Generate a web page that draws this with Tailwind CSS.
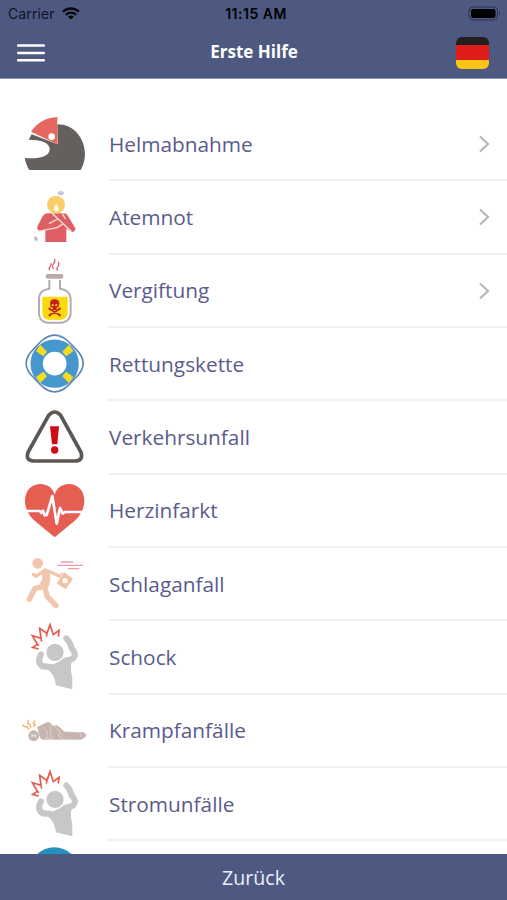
<!DOCTYPE html>
<html lang="de">
<head>
<meta charset="utf-8">
<title>Erste Hilfe</title>
<script src="https://cdn.jsdelivr.net/npm/@tailwindcss/browser@4"></script>
</head>
<body class="w-[507px] h-[900px] overflow-hidden bg-white flex flex-col font-['Open_Sans',sans-serif] text-[#5a5b8c]">
<header class="h-[79px] shrink-0 bg-[#4e5982] border-b border-[#8f9ab5]">
  <div class="h-[27px] grid grid-cols-3 items-center pl-2 pr-[6px] text-black font-['Inter',sans-serif]">
    <div class="flex items-center gap-[7px] text-[14px] text-[#101425]"><span class="tracking-[0.1px]">Carrier</span>
      <svg class="w-[18px] h-[13px]" viewBox="0 0 18 13" fill="none" stroke="#05070d" stroke-width="2.3"><path d="M1 4.8C5.5.4 12.5.4 17 4.8M3.9 7.8c2.9-2.8 7.3-2.8 10.2 0"/><path d="M9 12.6 5.9 9.7q3.1-2.4 6.2 0z" fill="#05070d" stroke="none"/></svg>
    </div>
    <div class="text-center text-[14px] font-semibold tracking-[0.5px] whitespace-nowrap pl-[3px]"><span>11:15 AM</span></div>
    <svg class="w-[33px] h-[15px] justify-self-end" viewBox="0 0 33 15"><rect x="1" y="1" width="28.5" height="13" rx="4" fill="none" stroke="#2d3450"/><rect x="3" y="3" width="24.5" height="9" rx="2" fill="#000"/><path d="M31 5.5q2 2 0 4z" fill="#2d3450"/></svg>
  </div>
  <div class="h-[51px] grid grid-cols-3 items-center pl-[17px] pr-[18px]">
    <svg class="w-[28px] h-[18px]" viewBox="0 0 28 18" stroke="#fff" stroke-width="2.5" stroke-linecap="round"><path d="M1.2 1.5h25.6M1.2 9h25.6M1.2 16.3h25.6"/></svg>
    <h1 class="text-center text-[17px] font-bold text-white whitespace-nowrap pl-[2px] pb-px"><span>Erste Hilfe</span></h1>
    <div class="w-[33px] h-[32px] rounded-[6px] overflow-hidden justify-self-end flex flex-col"><div class="h-[8px] bg-[#231f20]"></div><div class="h-[15px] bg-[#df1b1b]"></div><div class="flex-1 bg-[#fdc513]"></div></div>
  </div>
</header>

<main class="flex-1 min-h-0 overflow-hidden pt-[29px] text-[20.8px]">
  <ul>
    <li class="flex h-[73.33px]">
      <svg class="w-[90px] h-full ml-[10px] mr-[8px] overflow-visible" viewBox="0 9 270 220"><path d="M142 58C190 58 225 98 225 148Q225 172 212 195H58Q49 182 44 159C80 162 119 158 119 132C119 113 92 104 56 104L65 88 143 118z" fill="#65605e"/><path d="M142 36V118L63 80Q92 38 142 36z" fill="#e5675f"/><circle cx="125" cy="95" r="10" fill="#fff"/></svg>
      <div class="flex-1 border-b-2 border-[#f1f1f3] flex items-center justify-between pl-px pt-px pr-[17px]"><span>Helmabnahme</span><svg class="w-[12px] h-[18px]" viewBox="0 0 12 18" fill="none" stroke="#b7b7bc" stroke-width="2.2"><path d="m2 1.5 8 7.5-8 7.5"/></svg></div>
    </li>
    <li class="flex h-[73.33px]">
      <svg class="w-[90px] h-full ml-[10px] mr-[8px] overflow-visible" viewBox="0 4 270 220"><path d="M112 101H163Q171 102 176 112L196 146Q197 157 184 157L169 147V187H106V151L88 153Q78 149 83 139L98 110Q103 101 112 101z" fill="#df6064"/><path d="M85 155 141 144 157 134M126 101 185 156M117 132 143 118M157 102 166 118" fill="none" stroke="#f8dedd" stroke-width="4"/><circle cx="138" cy="75" r="27" fill="#f8cf68"/><path d="M139 72q-9 12-7 19 7 9 14 0 1-9-7-19z" fill="#fffdf4"/><path d="M142 39q4-7 16-4l5 6-5 6h-12z" fill="#c5c8d8"/><path d="m72 173 8-4 4 8-3 9-9-5z" fill="#d1d1d3"/><path d="m73 172 9 10" stroke="#929297" stroke-width="2"/></svg>
      <div class="flex-1 border-b-2 border-[#f1f1f3] flex items-center justify-between pl-px pt-px pr-[17px]"><span>Atemnot</span><svg class="w-[12px] h-[18px]" viewBox="0 0 12 18" fill="none" stroke="#b7b7bc" stroke-width="2.2"><path d="m2 1.5 8 7.5-8 7.5"/></svg></div>
    </li>
    <li class="flex h-[73.33px]">
      <svg class="w-[90px] h-full ml-[10px] mr-[8px] overflow-visible" viewBox="0 5 270 220"><path d="M118 80V106Q87 110 87 135V184Q91 207 113 208H156Q181 203 182 181V135Q180 110 150 106V80" fill="#fff" stroke="#b9aaab" stroke-width="6"/><path d="M97 130H173V178Q171 197 154 199H115Q99 197 97 181z" fill="#fbd90c"/><rect x="107" y="62" width="53" height="14" rx="6" fill="#b9aaab"/><path d="M119 51q-4-7 2-13 4-5 2-9M131 47q-8-7 0-16 6-7 2-15M143 52q-5-7 1-13 5-6 1-14" fill="none" stroke="#d65a68" stroke-width="3.5"/><path d="m119 167 30 18m0-18-30 18" stroke="#c51f16" stroke-width="5" stroke-linecap="round"/><g fill="#c51f16"><path d="M120 151q0-13 14-13t14 13l-2 9-6 3v7h-12v-7l-7-3z"/><circle cx="119" cy="166" r="3.5"/><circle cx="149" cy="166" r="3.5"/><circle cx="119" cy="186" r="3.5"/><circle cx="149" cy="186" r="3.5"/></g><path d="M125 153h6v5h-6zm11 0h6v5h-6z" fill="#fbd90c"/></svg>
      <div class="flex-1 border-b-2 border-[#f1f1f3] flex items-center justify-between pl-px pt-px pr-[17px]"><span>Vergiftung</span><svg class="w-[12px] h-[18px]" viewBox="0 0 12 18" fill="none" stroke="#b7b7bc" stroke-width="2.2"><path d="m2 1.5 8 7.5-8 7.5"/></svg></div>
    </li>
    <li class="flex h-[73.33px]">
      <svg class="w-[90px] h-full ml-[10px] mr-[8px] overflow-visible" viewBox="0 0 270 220"><path d="M91 42Q134 1 177 42L196 62Q243 107 196 150L177 170Q134 213 91 170L72 150Q25 107 72 62z" fill="#fff" stroke="#5c86b3" stroke-width="5"/><circle cx="134" cy="107" r="54" fill="none" stroke="#4797cf" stroke-width="37"/><path d="m91 52 19 19-10 13-21-15zm86 0-19 19 10 13 21-15zM91 164l19-19-10-13-21 15zm86 0-19-19 10-13 21 15z" fill="#f6dc1d" stroke="#f6dc1d" stroke-width="2"/></svg>
      <div class="flex-1 border-b-2 border-[#f1f1f3] flex items-center pl-px pt-px"><span>Rettungskette</span></div>
    </li>
    <li class="flex h-[73.33px]">
      <svg class="w-[90px] h-full ml-[10px] mr-[8px] overflow-visible" viewBox="0 -3 270 220"><path d="M116 40Q134 20 152 40L213 151Q220 175 198 177H70Q46 175 54 151z" fill="#fff" stroke="#5d5653" stroke-width="11"/><path d="M120 73H147L142 127H126z" fill="#cf0b18"/><circle cx="134" cy="144" r="11" fill="#cf0b18"/></svg>
      <div class="flex-1 border-b-2 border-[#f1f1f3] flex items-center pl-px pt-px"><span>Verkehrsunfall</span></div>
    </li>
    <li class="flex h-[73.33px]">
      <svg class="w-[90px] h-full ml-[10px] mr-[8px] overflow-visible" viewBox="0 -1 270 220"><path d="M134 58C122 17 68 17 51 50C37 81 49 112 72 135L134 186 196 135C219 112 231 81 217 50C200 17 146 17 134 58z" fill="#e65d52"/><path d="M45 107H90L94 113 99 106 104 120 110 119 127 62 140 145 150 98 158 115 165 110H225" fill="none" stroke="#fff" stroke-width="8" stroke-linejoin="round"/></svg>
      <div class="flex-1 border-b-2 border-[#f1f1f3] flex items-center pl-px pt-px"><span>Herzinfarkt</span></div>
    </li>
    <li class="flex h-[73.33px]">
      <svg class="w-[90px] h-full ml-[10px] mr-[8px] overflow-visible" viewBox="0 0 270 220"><g fill="none" stroke="#f2c5ad" stroke-linecap="round" stroke-linejoin="round"><path d="M101 115 75 121 58 154M104 117 112 146 138 173" stroke-width="16"/><path d="M70 79 78 85 101 69 120 71 148 84" stroke-width="10"/></g><path d="m93 69 13-9 14 8 1 27-6 24-21-3-4-10 8-15z" fill="#f2c5ad"/><circle cx="83" cy="46" r="16" fill="#f2c5ad"/><path d="m163 73 26 19-22 32-27-18z" fill="#efc2a8"/><path d="m148 89 7-13 13 3" fill="none" stroke="#efc2a8" stroke-width="4"/><circle cx="165" cy="98" r="8" fill="#fff8f2"/><path d="M153 42h36M142 52h77M174 62h34" stroke="#f29ba6" stroke-width="4"/></svg>
      <div class="flex-1 border-b-2 border-[#f1f1f3] flex items-center pl-px pt-px"><span>Schlaganfall</span></div>
    </li>
    <li class="flex h-[73.33px]">
      <svg class="w-[90px] h-full ml-[10px] mr-[8px] overflow-visible" viewBox="0 9 270 220"><g id="startled"><path d="M87 147Q100 156 116 147L155 125 188 119Q178 145 187 180L187 214 138 202Q134 170 113 154Q92 157 87 147z" fill="#c7c7c6"/><path d="M93 109Q80 133 97 144L123 147M169 61Q181 74 185 91 202 109 189 122L165 129" fill="none" stroke="#c7c7c6" stroke-width="18" stroke-linecap="round" stroke-linejoin="round"/><circle cx="135" cy="103" r="28" fill="#c7c7c6" stroke="#fff" stroke-width="4"/><path d="M86 93 68 88 82 79 67 53 93 61 89 31 111 46 120 20 130 50 147 37 145 56M82 79l5 4M93 61l2 10M111 46l-2 10" fill="none" stroke="#e4594e" stroke-width="5"/></g></svg>
      <div class="flex-1 border-b-2 border-[#f1f1f3] flex items-center pl-px pt-px"><span>Schock</span></div>
    </li>
    <li class="flex h-[73.33px]">
      <svg class="w-[90px] h-full ml-[10px] mr-[8px] overflow-visible" viewBox="0 -16 270 220"><circle cx="71" cy="106" r="16" fill="#c6b4af"/><path d="M66 99v13M76 99v13M66 106h10" stroke="#eee6e3" stroke-width="3"/><path d="M83 80 113 66Q123 66 126 77L142 76 163 95 210 97 219 96 223 98Q232 104 225 110L214 117H99Q90 115 89 106z" fill="#c6b4af" stroke="#c6b4af" stroke-width="2"/><path d="m98 82 13 11v20m8-41 5 40m10-34 16 17-5 13 16 8m-55-2h22m25-15 12 12m43-15 7 14" fill="none" stroke="#e0d5d0" stroke-width="2.5"/><path d="M57 88 50 78 43 79 38 73M63 82 59 72 53 69 55 59M72 81l3-8-5-4 5-8" fill="none" stroke="#f6b06c" stroke-width="4"/></svg>
      <div class="flex-1 border-b-2 border-[#f1f1f3] flex items-center pl-px pt-px"><span>Krampfanfälle</span></div>
    </li>
    <li class="flex h-[73.33px]">
      <svg class="w-[90px] h-full ml-[10px] mr-[8px] overflow-visible" viewBox="0 9 270 220"><use href="#startled"/></svg>
      <div class="flex-1 border-b-2 border-[#f1f1f3] flex items-center pl-px pt-px"><span>Stromunfälle</span></div>
    </li>
    <li class="flex h-[73.33px]">
      <svg class="w-[90px] h-full ml-[10px] mr-[8px]" viewBox="0 3 270 220"><circle cx="133" cy="98" r="76" fill="#2390c0"/></svg>
    </li>
  </ul>
</main>
<footer class="h-[46px] shrink-0 bg-[#4e5982] text-[#e9effa] flex items-center justify-center pt-px text-[19.6px]"><span>Zurück</span></footer>
</body>
</html>
